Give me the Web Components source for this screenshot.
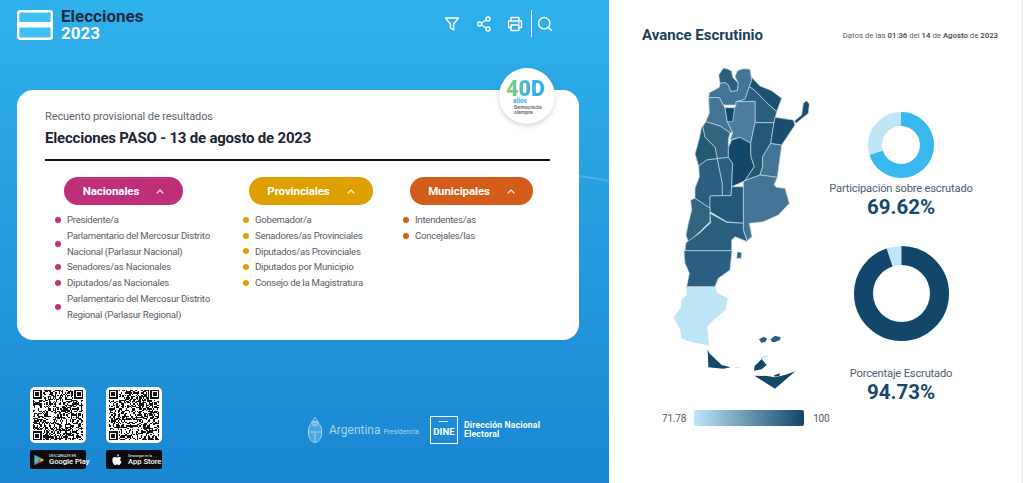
<!doctype html>
<html lang="es">
<head>
<meta charset="utf-8">
<title>Elecciones 2023</title>
<style>
  html, body { margin: 0; height: 100%; background: #fff; overflow: hidden; }
  body { font-family: Roboto, "Noto Sans", sans-serif; }
</style>
</head>
<body>
<election-app></election-app>
<script>
const FONT = `Roboto, "Noto Sans", sans-serif`;

class AppHeader extends HTMLElement {
  constructor() { super(); this.attachShadow({ mode: "open" }); }
  connectedCallback() {
    this.shadowRoot.innerHTML = `
    <style>
      :host { display: flex; align-items: flex-start; height: 90px; box-sizing: border-box; padding: 10px 0 0 17px; }
      .logo { width: 36px; height: 30px; display: block; }
      .name { margin-left: 8px; margin-top: -2px; font-size: 17px; line-height: 17px; font-weight: 700; color: #1c2b3c; }
      .name span { display: block; color: #fff; }
      .tools { margin-left: auto; display: flex; align-items: center; height: 27px; padding-right: 56px; }
      .tools svg { width: 16px; height: 16px; fill: none; stroke: #fff; stroke-width: 1.4; stroke-linecap: round; stroke-linejoin: round; display: block; }
      .tools svg + svg { margin-left: 16px; }
      .tools svg:nth-child(3) { margin-left: 15px; }
      .tools i { display: block; width: 1px; height: 27px; background: #fff; margin: 0 5px 0 8px; }
      .tools i + svg { margin-left: 0; }
    </style>
    <svg class="logo" viewBox="0 0 36 30"><rect x="1.200" y="1.200" width="33.600" height="27.600" rx="2" fill="#40bff4" stroke="#fff" stroke-width="2.400"/><rect x="1" y="12" width="34" height="5.500" fill="#fff"/></svg>
    <div class="name">Elecciones<span>2023</span></div>
    <div class="tools">
      <svg viewBox="0 0 16 16"><path d="M1.500 2h13L9.600 8v6L6.400 12V8z"/></svg>
      <svg viewBox="0 0 16 16"><circle cx="12" cy="3" r="2"/><circle cx="3.600" cy="8" r="2"/><circle cx="12" cy="13" r="2"/><path d="M5.400 7 10.200 4M5.400 9l4.800 3"/></svg>
      <svg viewBox="0 0 16 16"><path d="M4 5V1.500h8V5M4 11.500H1.500V5h13v6.500H12"/><path d="M4 9h8v5.500H4z"/><path d="M11.500 7h.5"/></svg>
      <i></i>
      <svg viewBox="0 0 16 16"><circle cx="7.200" cy="7.200" r="5.700"/><path d="m11.400 11.400 3.100 3.100"/></svg>
    </div>`;
  }
}

class CategoryColumn extends HTMLElement {
  constructor() { super(); this.attachShadow({ mode: "open" }); }
  connectedCallback() {
    const color = this.getAttribute("color");
    this.shadowRoot.innerHTML = `
    <style>
      :host { display: block; }
      .btn { display: flex; align-items: center; justify-content: center; gap: 17px; height: 28px; border-radius: 14px; background: ${color}; color: #fff; font-size: 11.5px; font-weight: 700; letter-spacing: -.1px; width: var(--btn-w); margin-left: var(--btn-x); margin-bottom: 7px; }
      .btn svg { width: 8px; height: 5px; fill: none; stroke: #fff; stroke-width: 1.1; }
      .list { display: flex; flex-direction: column; }
    </style>
    <div class="btn"><span>${this.getAttribute("title")}</span><svg viewBox="0 0 8 5"><path d="M.7 4.400 4 1l3.300 3.400"/></svg></div>
    <div class="list"><slot></slot></div>`;
  }
}

class CategoryItem extends HTMLElement {
  constructor() { super(); this.attachShadow({ mode: "open" }); }
  connectedCallback() {
    this.shadowRoot.innerHTML = `
    <style>
      :host { display: flex; align-items: center; gap: 6px; color: #565d68; font-size: 9.6px; line-height: 15.8px; letter-spacing: -.25px; width: 165px; }
      i { flex: none; width: 6px; height: 6px; border-radius: 50%; background: var(--dot); }
    </style>
    <i></i><span><slot></slot></span>`;
  }
}

class ResultCard extends HTMLElement {
  constructor() { super(); this.attachShadow({ mode: "open" }); }
  connectedCallback() {
    this.shadowRoot.innerHTML = `
    <style>
      :host { display: block; position: relative; width: 562px; height: 250px; box-sizing: border-box; margin-left: 17px; padding: 19px 29px 0 28px; background: #fff; border-radius: 16px; }
      .sub { font-size: 11px; line-height: 16px; letter-spacing: -.1px; color: #5c6672; }
      h1 { margin: 3px 0 0; font-size: 15px; line-height: 20px; font-weight: 700; letter-spacing: -.2px; color: #1b2433; }
      hr { border: 0; height: 1.5px; background: #111; margin: 11px 0 16.5px; }
      .cols { display: grid; grid-template-columns: 188px 160px 1fr; margin-left: 10px; }
      .badge { position: absolute; left: 482px; top: -22px; width: 56px; height: 56px; border-radius: 50%; background: #fff; box-shadow: 0 2px 5px rgba(0,0,0,.18); }
      .badge b { position: absolute; left: 7px; top: 12px; font-size: 21.5px; line-height: 18px; font-weight: 900; color: transparent; background: linear-gradient(90deg, #a8d05a 0, #5cc0b0 32%, #36b0e6 58%); -webkit-background-clip: text; background-clip: text; }
      .badge u { position: absolute; left: 14px; top: 30px; text-decoration: none; font-size: 6.5px; line-height: 7px; font-weight: 700; color: #36b0e6; }
      .badge span { position: absolute; left: 15px; top: 37px; font-size: 5.2px; line-height: 5px; font-weight: 700; color: #6a6f76; white-space: nowrap; }
      category-column:nth-child(1) { --dot: #c0307a; --btn-w: 119px; --btn-x: 9px; }
      category-column:nth-child(2) { --dot: #dea000; --btn-w: 124px; --btn-x: 6px; }
      category-column:nth-child(3) { --dot: #d35c18; --btn-w: 123px; --btn-x: 7px; }
    </style>
    <div class="badge"><b>40D</b><u>años</u><span>Democracia<br>siempre</span></div>
    <div class="sub">Recuento provisional de resultados</div>
    <h1>Elecciones PASO - 13 de agosto de 2023</h1>
    <hr>
    <div class="cols">
      <category-column title="Nacionales" color="#c0307a">
        <category-item>Presidente/a</category-item>
        <category-item>Parlamentario del Mercosur Distrito Nacional (Parlasur Nacional)</category-item>
        <category-item>Senadores/as Nacionales</category-item>
        <category-item>Diputados/as Nacionales</category-item>
        <category-item>Parlamentario del Mercosur Distrito Regional (Parlasur Regional)</category-item>
      </category-column>
      <category-column title="Provinciales" color="#dea000">
        <category-item>Gobernador/a</category-item>
        <category-item>Senadores/as Provinciales</category-item>
        <category-item>Diputados/as Provinciales</category-item>
        <category-item>Diputados por Municipio</category-item>
        <category-item>Consejo de la Magistratura</category-item>
      </category-column>
      <category-column title="Municipales" color="#d35c18">
        <category-item>Intendentes/as</category-item>
        <category-item>Concejales/las</category-item>
      </category-column>
    </div>`;
  }
}

class StoreQr extends HTMLElement {
  constructor() { super(); this.attachShadow({ mode: "open" }); }
  connectedCallback() {
    // the code itself is only a look-alike: fixed seed, same picture on every load
    let seed = Number(this.getAttribute("seed"));
    const rnd = () => (seed = (seed * 16807) % 2147483647) / 2147483647;
    const n = 41;
    const inFinder = (x, y) => (x < 8 && y < 8) || (x >= n - 8 && y < 8) || (x < 8 && y >= n - 8);
    let cells = "";
    for (let y = 0; y < n; y++) for (let x = 0; x < n; x++) {
      if (!inFinder(x, y) && rnd() > .5) cells += `M${x} ${y}h1v1h-1z`;
    }
    const finder = (x, y) => `<path d="M${x} ${y}h7v7h-7zM${x + 1} ${y + 1}v5h5v-5z" fill-rule="evenodd"/><rect x="${x + 2}" y="${y + 2}" width="3" height="3"/>`;
    const apple = this.getAttribute("store") === "apple";
    const icon = apple
      ? `<svg viewBox="0 0 12 14"><path fill="#fff" d="M8.400 0c.1 1.200-.9 2.700-2.400 2.700C5.900 1.400 7 .2 8.400 0zM11 4.700c-1.700 1-1.500 3.500.4 4.400-.6 1.700-1.800 3.900-3.100 3.900-.9 0-1.300-.6-2.300-.6s-1.500.6-2.300.6C2.200 13 .4 9.700.4 7.200c0-2.400 1.500-3.800 3-3.800 1 0 1.800.7 2.500.7.6 0 1.600-.8 2.800-.7.9 0 1.800.4 2.300 1.300z"/></svg>`
      : `<svg viewBox="0 0 12 14"><path fill="#3bc6f0" d="M.5.800v12.400L6.700 7z"/><path fill="#46c26d" d="M.5.800 9 5 6.700 7z"/><path fill="#e8473f" d="M.5 13.200 9 9 6.700 7z"/><path fill="#fbc12d" d="M9 5l3 2-3 2-2.300-2z"/></svg>`;
    this.shadowRoot.innerHTML = `
    <style>
      :host { display: block; width: 56px; }
      .qr { background: #fff; border-radius: 5px; padding: 3px; width: 50px; height: 50px; }
      .qr svg { display: block; width: 50px; height: 50px; }
      .store { margin-top: 7px; height: 19px; background: #0b0b0b; border-radius: 2px; display: flex; align-items: center; color: #fff; }
      .store svg { width: 10px; height: 12px; flex: none; }
      .store div { font-size: 7.6px; line-height: 8px; font-weight: 500; white-space: nowrap; }
      .store small { display: block; font-size: 3.5px; line-height: 4px; font-weight: 400; }
    </style>
    <div class="qr"><svg viewBox="0 0 41 41" fill="#111" shape-rendering="crispEdges"><path d="${cells}"/>${finder(0, 0)}${finder(34, 0)}${finder(0, 34)}</svg></div>
    <div class="store" style="padding-left:${apple ? 6 : 4}px; gap:${apple ? 6 : 5}px">${icon}<div><small>${this.getAttribute("small")}</small>${this.getAttribute("name")}</div></div>`;
  }
}

class FooterLogos extends HTMLElement {
  constructor() { super(); this.attachShadow({ mode: "open" }); }
  connectedCallback() {
    this.shadowRoot.innerHTML = `
    <style>
      :host { display: flex; align-items: center; }
      .arg { display: flex; align-items: center; color: #a5d8f3; }
      .arg svg { width: 16px; height: 28px; margin-right: 6px; }
      .arg b { font-weight: 400; font-size: 12px; }
      .arg small { font-size: 6.6px; margin-left: 3px; margin-top: 3px; letter-spacing: .1px; }
      .dine { width: 28px; height: 28px; box-sizing: border-box; border: 1.5px solid #fff; margin-left: 11px; display: flex; flex-direction: column; align-items: center; color: #fff; font-size: 9.6px; font-weight: 700; line-height: 11px; }
      .dine i { flex: none; width: 9px; height: 1px; background: #fff; margin: 4px 0 4px; }
      .text { margin-left: 6px; color: #fff; font-size: 8.6px; line-height: 9.5px; font-weight: 700; letter-spacing: .2px; }
    </style>
    <div class="arg">
      <svg viewBox="0 0 16 28" fill="#a5d8f3" fill-opacity=".35" stroke="#a5d8f3" stroke-width=".9"><ellipse cx="8" cy="16" rx="6.800" ry="10.500"/><path d="M1.500 16h13M8 26.500V16M4 7 8 1.500 12 7" fill="none"/><circle cx="8" cy="7.500" r="2.500"/></svg>
      <b>Argentina</b><small>Presidencia</small>
    </div>
    <div class="dine"><i></i>DINE</div>
    <div class="text">Dirección Nacional<br>Electoral</div>`;
  }
}

class DonutStat extends HTMLElement {
  constructor() { super(); this.attachShadow({ mode: "open" }); }
  connectedCallback() {
    const value = Number(this.getAttribute("value"));
    const size = Number(this.getAttribute("size"));
    const width = Number(this.getAttribute("stroke"));
    const r = (size - width) / 2;
    const len = 2 * Math.PI * r;
    this.shadowRoot.innerHTML = `
    <style>
      :host { display: flex; flex-direction: column; align-items: center; text-align: center; white-space: nowrap; }
      svg { display: block; width: ${size}px; height: ${size}px; margin-bottom: var(--chart-gap, 4px); }
      .label { font-size: 11.2px; line-height: 14px; letter-spacing: -.2px; color: #4e6072; }
      .value { font-size: 20.5px; line-height: 22px; font-weight: 700; color: #17486b; }
    </style>
    <svg viewBox="0 0 ${size} ${size}" fill="none" stroke-width="${width}">
      <circle cx="${size / 2}" cy="${size / 2}" r="${r}" stroke="#bfe6f8"/>
      <circle cx="${size / 2}" cy="${size / 2}" r="${r}" stroke="${this.getAttribute("color")}" stroke-dasharray="${len * value / 100} ${len}" transform="rotate(-90 ${size / 2} ${size / 2})"/>
    </svg>
    <div class="label">${this.getAttribute("label")}</div>
    <div class="value">${value.toFixed(2)}%</div>`;
  }
}

class ArgentinaMap extends HTMLElement {
  constructor() { super(); this.attachShadow({ mode: "open" }); }
  connectedCallback() {
    const p = (d, fill) => `<path d="${d}" fill="${fill}"/>`;
    this.shadowRoot.innerHTML = `
    <style>
      :host { display: block; width: 160px; height: 340px; }
      svg { display: block; width: 160px; height: 340px; }
      path { stroke: #c6d9e4; stroke-width: 2; stroke-linejoin: round; }
      .isle { stroke: none; }
    </style>
    <svg viewBox="0 0 480 1020">
      ${p("M176 45 190 24 205 28 215 34 218 52 235 70 232 92 212 95 205 75 195 68 180 70Z", "#2a5f80")}
      ${p("M232 32 250 26 270 28 275 60 255 118 228 125 228 135 190 135 178 113 146 113 148 98 178 82 180 70 195 68 205 75 212 95 232 92 235 70 225 50Z", "#437495")}
      ${p("M275 52 300 78 335 92 365 115 350 155 320 128 285 92 268 80 275 60Z", "#1d5071")}
      ${p("M268 80 285 92 320 128 350 155 342 188 285 188 285 124 228 125 255 118Z", "#2a5f80")}
      ${p("M146 113 178 113 190 135 195 143 202 185 218 218 210 218 180 198 137 185 148 160Z", "#437495")}
      ${p("M228 125 285 124 285 188 272 250 240 232 210 240 218 218 202 185 224 143 228 135Z", "#4d7c9c")}
      ${p("M195 143 224 143 218 185 202 185Z", "#134768")}
      ${p("M137 185 180 198 210 218 205 240 205 292 172 296 165 262 135 232 128 200Z", "#336583")}
      ${p("M125 200 128 200 135 232 165 262 172 296 140 300 116 318 105 282 118 235Z", "#245877")}
      ${p("M116 318 140 300 172 296 187 370 187 407 150 408 150 445 105 415 105 385 118 350Z", "#2a5f80")}
      ${p("M172 296 205 292 218 310 215 380 213 407 187 407 187 370Z", "#2a5f80")}
      ${p("M205 292 205 262 215 240 240 232 272 250 273 290 283 320 255 362 215 380 218 310Z", "#134768")}
      ${p("M285 188 342 188 332 250 308 290 308 320 300 345 255 362 283 320 273 290 272 250Z", "#245877")}
      ${p("M332 250 365 255 352 352 300 345 308 320 308 290Z", "#437495")}
      ${p("M345 172 400 180 405 195 365 255 332 250 342 188Z", "#1a4d6e")}
      ${p("M403 183 425 165 430 130 440 122 448 132 445 160 408 190Z", "#1a4d6e")}
      ${p("M250 365 255 362 300 345 352 352 342 375 350 382 375 385 388 430 355 465 310 485 268 490 276 530 262 542 250 510Z", "#437495")}
      ${p("M150 408 187 407 213 407 215 380 250 380 250 490 200 485 150 455Z", "#245877")}
      ${p("M92 420 105 415 150 445 150 485 118 517 85 547 78 525 85 490 95 450Z", "#336583")}
      ${p("M150 460 200 487 250 490 250 510 262 545 225 530 215 540 215 572 75 572 78 548 118 520 152 488Z", "#2a5f80")}
      ${p("M72 572 216 572 210 630 175 655 165 680 80 680 88 640 75 610Z", "#2a5f80")}
      ${p("M232 575 245 578 243 595 230 595Z", "#2a5f80")}
      ${p("M80 681 165 681 170 700 202 715 195 750 165 775 140 800 146 855 95 845 65 835 62 810 42 772 65 740 65 720 82 705Z", "#bde6f7")}
      <path class="isle" d="M143 868 148 880 185 915 212 922 190 926 145 922Z" fill="#134768"/>
      <path class="isle" d="M225 921h14v3h-14z" fill="#bde6f7"/>
      <path class="isle" d="M297 838 312 830 322 836 316 846 304 848Z" fill="#2a5f80"/>
      <path class="isle" d="M332 838 345 827 362 832 360 840 345 846 336 846Z" fill="#2a5f80"/>
      <path class="isle" d="M300 892 325 885 322 890 304 898Z" fill="#bde6f7"/>
      <path class="isle" d="M282 932 284 918 297 905 305 897 320 915 305 928Z" fill="#134768"/>
      <path class="isle" d="M342 946 360 940 358 948 344 950Z" fill="#134768"/>
      <path class="isle" d="M283 947 322 948 345 952 375 945 406 934 345 986Z" fill="#134768"/>
    </svg>`;
  }
}

class MapLegend extends HTMLElement {
  constructor() { super(); this.attachShadow({ mode: "open" }); }
  connectedCallback() {
    this.shadowRoot.innerHTML = `
    <style>
      :host { display: flex; align-items: center; font-size: 10px; letter-spacing: -.2px; color: #4e5a66; height: 16px; white-space: nowrap; }
      i { display: block; flex: none; width: 110px; height: 16px; border-radius: 2px; margin: 0 9px 0 8px; background: linear-gradient(90deg, #bde6f7, #12466a); }
    </style>
    <span><slot name="min"></slot></span><i></i><span><slot name="max"></slot></span>`;
  }
}

class ElectionApp extends HTMLElement {
  constructor() { super(); this.attachShadow({ mode: "open" }); }
  connectedCallback() {
    this.shadowRoot.innerHTML = `
    <style>
      :host { display: grid; grid-template-columns: 609px 414px; height: 483px; font-family: ${FONT}; }
      .left { position: relative; overflow: hidden; background: linear-gradient(180deg, #2fb1ec 0%, #1a86d2 100%); }
      .left > * { position: relative; }
      .left > .swoosh { position: absolute; inset: 0; width: 609px; height: 483px; }
      .foot { display: flex; align-items: flex-start; padding: 47px 0 0 30px; }
      .foot store-qr + store-qr { margin-left: 20px; }
      footer-logos { margin: 29px 0 0 145px; }
      .right { background: #fff; padding: 26px 23px 0 33px; border-right: 2px solid #f0f0f0; }
      .top { display: flex; justify-content: space-between; align-items: center; height: 18px; }
      h2 { margin: 0; font-size: 15px; font-weight: 700; color: #1e3f58; }
      .date { font-size: 7.8px; color: #555f6a; padding-top: 1px; }
      .date b { font-weight: 500; color: #39434e; }
      .body { display: grid; grid-template-columns: 160px 162px; margin: 16px 0 0 18px; }
      .stats { padding-top: 52px; grid-row: 1 / 3; grid-column: 2; }
      donut-stat + donut-stat { margin-top: 28px; }
      .maplegend { grid-column: 1 / 2; margin-top: 10px; margin-left: 2px; }
    </style>
    <div class="left">
      <svg class="swoosh" viewBox="0 0 609 483" fill="none" stroke="#fff" stroke-opacity=".18"><path d="M579 176Q595 178 609 181" stroke-width="2"/></svg>
      <app-header></app-header>
      <result-card></result-card>
      <div class="foot">
        <store-qr seed="4711" store="google" small="DESCÁRGATE EN" name="Google Play"></store-qr>
        <store-qr seed="90210" store="apple" small="Descargar en la" name="App Store"></store-qr>
        <footer-logos></footer-logos>
      </div>
    </div>
    <div class="right">
      <div class="top"><h2>Avance Escrutinio</h2><div class="date">Datos de las <b>01:36</b> del <b>14</b> de <b>Agosto</b> de <b>2023</b></div></div>
      <div class="body">
        <argentina-map></argentina-map>
        <div class="stats">
          <donut-stat value="69.62" size="66" stroke="14" color="#38b8ef" label="Participación sobre escrutado"></donut-stat>
          <donut-stat value="94.73" size="95" stroke="19" color="#12466a" label="Porcentaje Escrutado" style="--chart-gap:26px"></donut-stat>
        </div>
        <map-legend class="maplegend"><span slot="min">71.78</span><span slot="max">100</span></map-legend>
      </div>
    </div>`;
  }
}

customElements.define("app-header", AppHeader);
customElements.define("category-column", CategoryColumn);
customElements.define("category-item", CategoryItem);
customElements.define("result-card", ResultCard);
customElements.define("store-qr", StoreQr);
customElements.define("footer-logos", FooterLogos);
customElements.define("donut-stat", DonutStat);
customElements.define("argentina-map", ArgentinaMap);
customElements.define("map-legend", MapLegend);
customElements.define("election-app", ElectionApp);
</script>
</body>
</html>
